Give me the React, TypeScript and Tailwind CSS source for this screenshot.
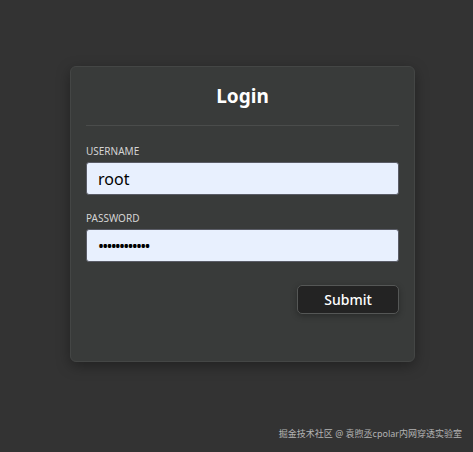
export default function App() {
  return (
    <div
      className="relative min-h-[452px] w-full bg-[#333333] pt-[66px]"
      style={{ fontFamily: '"Noto Sans", "Noto Sans CJK SC", sans-serif' }}
    >
      <div className="ml-[70px] w-[345px] rounded-md border border-[#444645] bg-[#393b3a] px-[15px] pt-[15px] pb-[47px] shadow-[0_4px_14px_rgba(0,0,0,0.35)]">
        <h1 className="h-[28px] text-center text-[19px] font-bold leading-[28px] text-white">Login</h1>
        <div className="mt-[15px] h-px bg-[#4a4c4b]" />

        <label className="mt-[18px] block text-[10px] leading-[14px] text-[#d4d4d4]">USERNAME</label>
        <div className="mt-[4px] flex h-[33px] items-center rounded-[3px] border border-[#5a5c66] bg-[#e8f0fe] px-[11px] text-[16px] text-black">
          root
        </div>

        <label className="mt-[16px] block text-[10px] leading-[14px] text-[#d4d4d4]">PASSWORD</label>
        <div className="mt-[4px] flex h-[33px] items-center rounded-[3px] border border-[#5a5c66] bg-[#e8f0fe] px-[11px] text-[16px] tracking-[-1.8px] text-black">
          ••••••••••••
        </div>

        <div className="mt-[23px] flex justify-end">
          <button className="h-[29px] w-[102px] rounded-[5px] border border-[#555756] bg-[#232323] text-[14px] font-medium text-white shadow-[0_2px_6px_rgba(0,0,0,0.3)]">
            Submit
          </button>
        </div>
      </div>

      <div className="absolute right-[11px] bottom-[12px] text-[9px] text-[#b4b4b4]">
        掘金技术社区 @ 袁煦丞cpolar内网穿透实验室
      </div>
    </div>
  );
}
